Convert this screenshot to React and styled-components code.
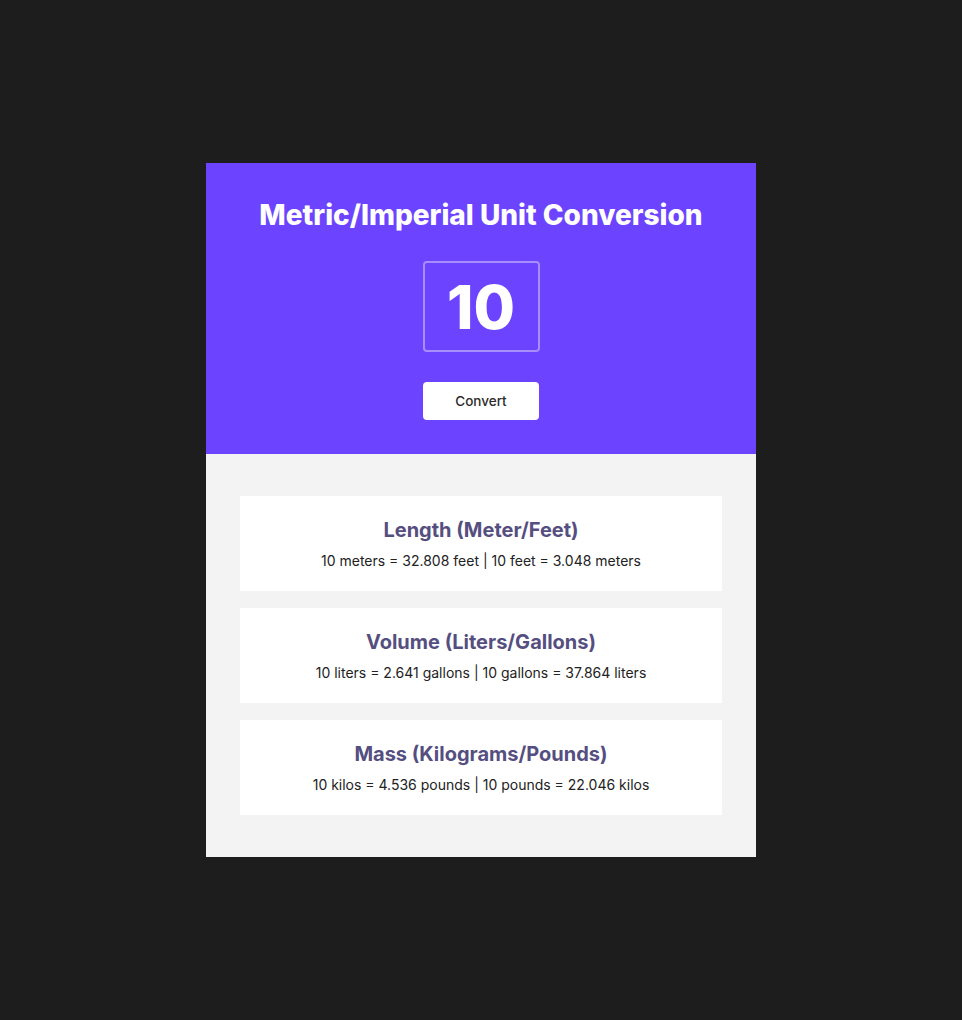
import React, { useState } from 'react';
import styled, { createGlobalStyle } from 'styled-components';

const GlobalStyle = createGlobalStyle`
  html, body {
    margin: 0;
    background: #1d1d1d;
    font-family: Inter, "Noto Sans", sans-serif;
  }
`;

const conversions = (n) => [
  {
    title: 'Length (Meter/Feet)',
    text: `${n} meters = ${(n * 3.2808).toFixed(3)} feet | ${n} feet = ${(n * 0.3048).toFixed(3)} meters`
  },
  {
    title: 'Volume (Liters/Gallons)',
    text: `${n} liters = ${(n * 0.26411).toFixed(3)} gallons | ${n} gallons = ${(n * 3.7864).toFixed(3)} liters`
  },
  {
    title: 'Mass (Kilograms/Pounds)',
    text: `${n} kilos = ${(n * 0.4536).toFixed(3)} pounds | ${n} pounds = ${(n * 2.2046).toFixed(3)} kilos`
  }
];

const App = () => {
  const [value, setValue] = useState('10');
  const [amount, setAmount] = useState(10);

  return (
    <Page>
      <GlobalStyle />
      <Card>
        <Header>
          <Title>Metric/Imperial Unit Conversion</Title>
          <NumberInput value={value} onChange={(e) => setValue(e.target.value)} />
          <Button onClick={() => setAmount(Number(value) || 0)}>Convert</Button>
        </Header>
        <Results>
          {conversions(amount).map((c) => (
            <Result key={c.title}>
              <ResultTitle>{c.title}</ResultTitle>
              <ResultText>{c.text}</ResultText>
            </Result>
          ))}
        </Results>
      </Card>
    </Page>
  );
};

export default App;

const Page = styled.div`
  min-height: 1020px;
  display: flex;
  justify-content: center;
  padding-top: 163px;
  box-sizing: border-box;
`;

const Card = styled.main`
  width: 550px;
  align-self: flex-start;
`;

const Header = styled.section`
  background: #6c43ff;
  padding: 34px 0;
  display: flex;
  flex-direction: column;
  align-items: center;
`;

const Title = styled.h1`
  margin: 0 0 28px;
  color: #fff;
  font-size: 28px;
  line-height: 36px;
  font-weight: 800;
`;

const NumberInput = styled.input`
  width: 117px;
  height: 91px;
  box-sizing: border-box;
  background: transparent;
  border: 2px solid rgba(255, 255, 255, 0.4);
  border-radius: 4px;
  color: #fff;
  font-family: Inter, sans-serif;
  font-size: 60px;
  font-weight: 800;
  text-align: center;
  outline: none;
  padding: 0;
`;

const Button = styled.button`
  margin-top: 30px;
  width: 116px;
  height: 38px;
  background: #fff;
  border: none;
  border-radius: 4px;
  color: #2b2b2b;
  font-family: Inter, sans-serif;
  font-size: 13.5px;
  font-weight: 500;
  cursor: pointer;
`;

const Results = styled.section`
  background: #f3f3f3;
  padding: 42px 34px;
  display: flex;
  flex-direction: column;
  gap: 17px;
`;

const Result = styled.div`
  background: #fff;
  height: 95px;
  box-sizing: border-box;
  padding-top: 22px;
  text-align: center;
`;

const ResultTitle = styled.h2`
  margin: 0 0 9px;
  color: #554e80;
  font-size: 20px;
  line-height: 24px;
  font-weight: 650;
`;

const ResultText = styled.p`
  margin: 0;
  color: #222;
  font-size: 14px;
  line-height: 20px;
`;
